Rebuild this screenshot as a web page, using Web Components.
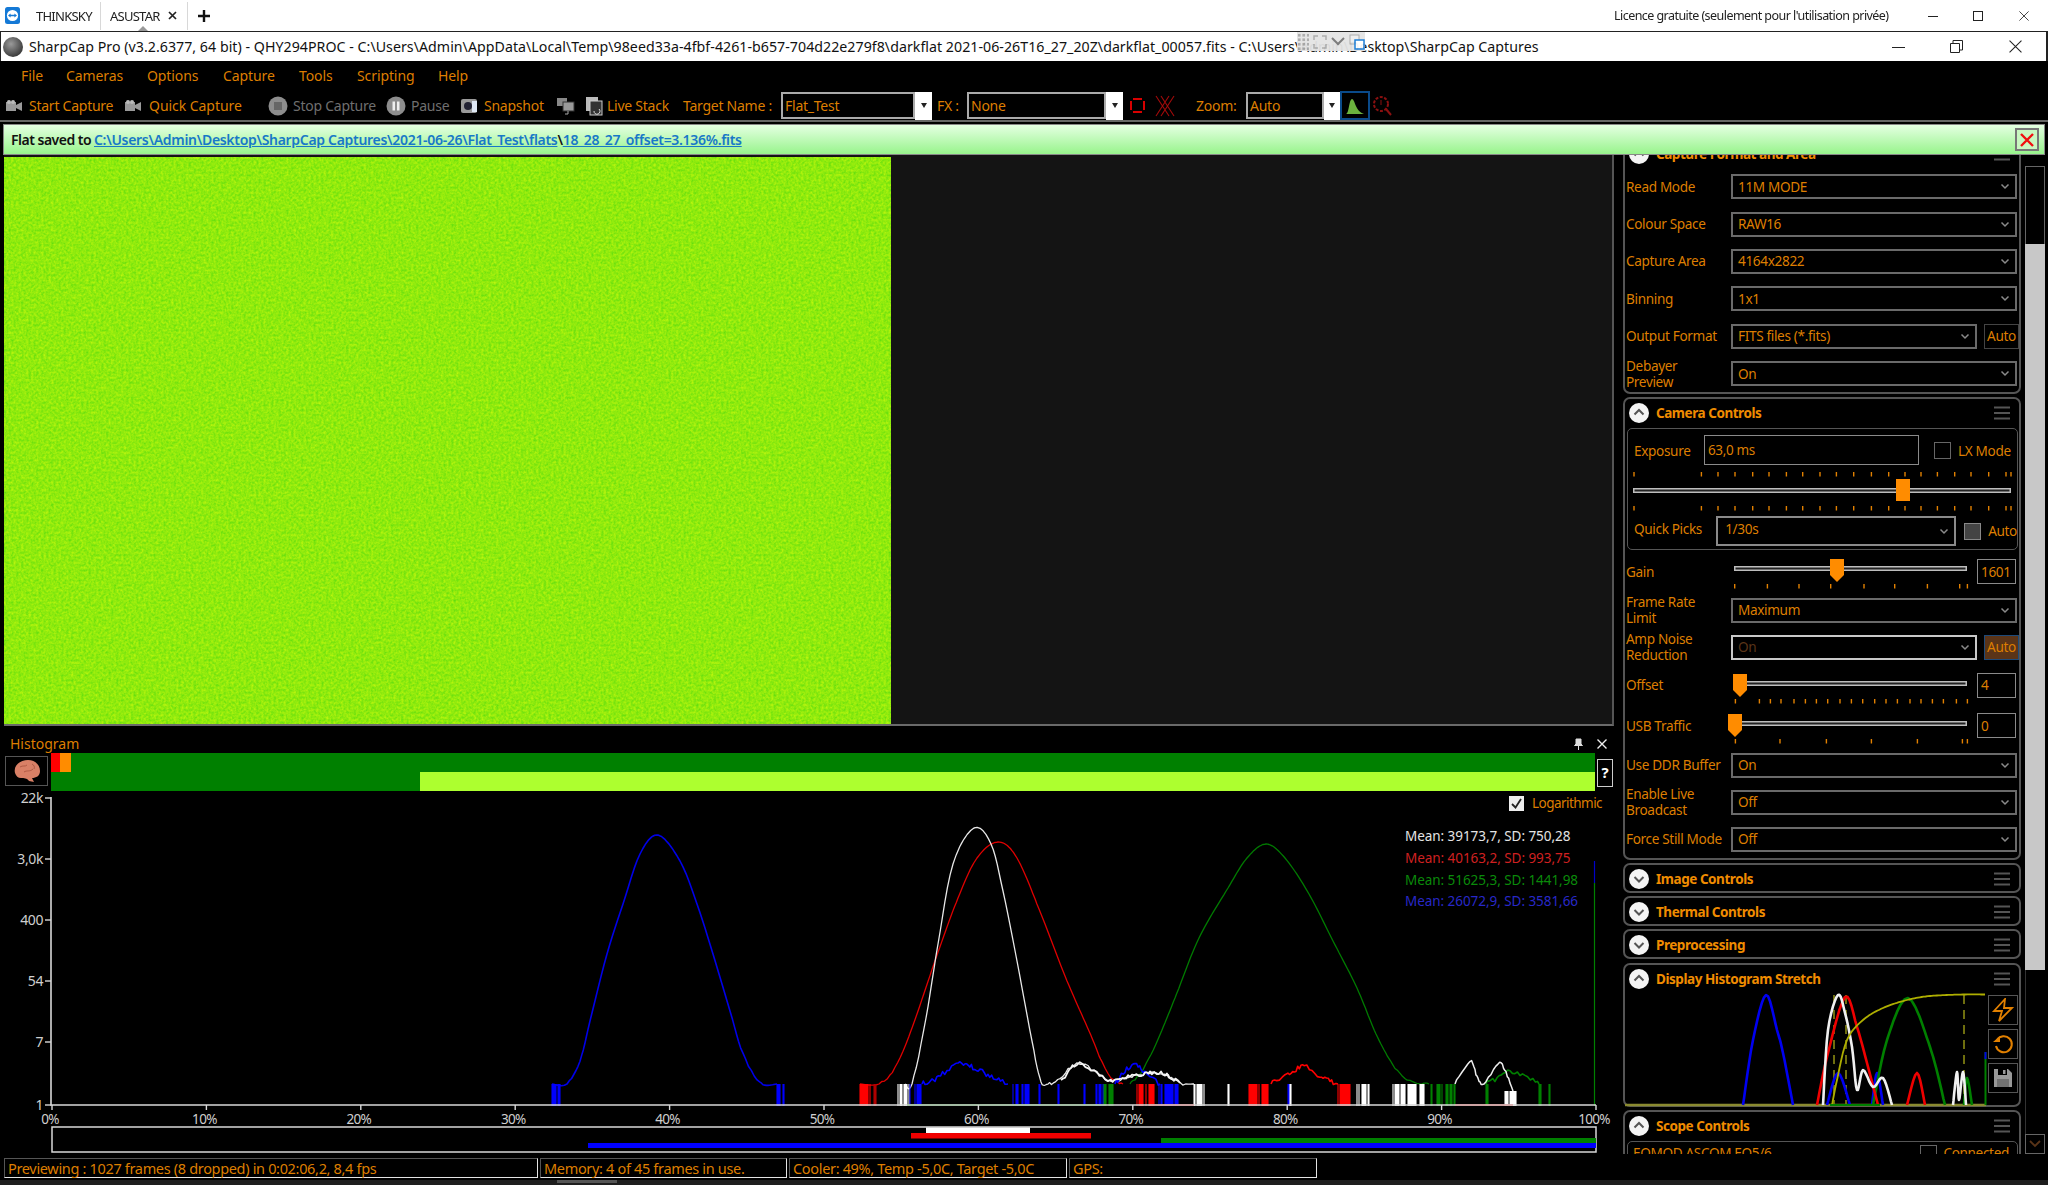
<!doctype html>
<html>
<head>
<meta charset="utf-8">
<title>SharpCap Pro</title>
<style>
  html, body { margin: 0; background: #000; }
  body { width: 2048px; height: 1185px; overflow: hidden; font-family: "Noto Sans", "Open Sans", sans-serif; }
  #app { display: flex; flex-direction: column; width: 2048px; height: 1185px; filter: blur(0.55px); }
</style>
</head>
<body>
<div id="app">
  <tab-strip></tab-strip>
  <title-strip></title-strip>
  <menu-strip></menu-strip>
  <tool-strip></tool-strip>
  <notice-strip></notice-strip>
  <main-area>
    <left-column>
      <view-pane></view-pane>
      <histogram-pane></histogram-pane>
    </left-column>
    <side-dock></side-dock>
  </main-area>
  <status-strip></status-strip>
</div>

<script>
const ORANGE = '#dd7e00'

function shadow(el, markup) {
  el.attachShadow({ mode: 'open' }).innerHTML = markup
}

// small seeded random so the noise in the graphs is the same each run
function rng(seed) {
  let s = seed
  return () => {
    s = (s * 16807) % 2147483647
    return s / 2147483647
  }
}

function noisy(points, amp, seed) {
  const rand = rng(seed)
  const out = []
  for (let i = 0; i < points.length - 1; i++) {
    const [x1, y1] = points[i]
    const [x2, y2] = points[i + 1]
    const steps = Math.max(1, Math.round((x2 - x1) / 2))
    for (let k = 0; k < steps; k++) {
      const t = k / steps
      const y = y1 + (y2 - y1) * t
      out.push([x1 + (x2 - x1) * t, y + (y < 1083 && y > 1050 ? (rand() - 0.5) * amp : 0)])
    }
  }
  out.push(points[points.length - 1])
  return out.map(p => p[0].toFixed(1) + ',' + p[1].toFixed(1)).join(' ')
}

// Catmull-Rom through the points, keeps the big bell curves round
function smooth(points, n = 6) {
  const out = []
  for (let i = 0; i < points.length - 1; i++) {
    const p0 = points[i - 1] || points[i]
    const p1 = points[i]
    const p2 = points[i + 1]
    const p3 = points[i + 2] || p2
    for (let k = 0; k < n; k++) {
      const t = k / n
      const f = a => 0.5 * (2 * p1[a] + (p2[a] - p0[a]) * t +
        (2 * p0[a] - 5 * p1[a] + 4 * p2[a] - p3[a]) * t * t +
        (3 * p1[a] - p0[a] - 3 * p2[a] + p3[a]) * t * t * t)
      out.push([f(0), f(1)])
    }
  }
  out.push(points[points.length - 1])
  return out
}

function poly(points, color, width = 1.2, amp = 0, seed = 7) {
  return `<polyline fill="none" stroke="${color}" stroke-width="${width}" stroke-linejoin="round" points="${noisy(smooth(points), amp, seed)}"/>`
}

function bars(x1, x2, color, seed, top = 1083) {
  const rand = rng(seed)
  let d = ''
  for (let x = x1; x <= x2; x++) {
    if (rand() < 0.7 || x === x1) d += `M${x} ${top}V1105`
  }
  return `<path d="${d}" stroke="${color}" stroke-width="1.1" fill="none"/>`
}

const chevron = `<svg width="10" height="7" viewBox="0 0 10 7"><path d="M1.5 1.5 5 5l3.5-3.5" fill="none" stroke="#8a8a8a" stroke-width="1.5"/></svg>`

const winClose = s => `<svg width="${s}" height="${s}" viewBox="0 0 12 12"><path d="M.5.5l11 11M11.5.5l-11 11" stroke="#222" stroke-width="1"/></svg>`

class TabStrip extends HTMLElement {
  constructor() {
    super()
    shadow(this, `
      <style>
        :host { display: flex; align-items: center; height: 31px; flex: none; background: #fff; color: #222; font: 13px "Noto Sans", sans-serif; letter-spacing: -.75px; position: relative; }
        .logo { margin-left: 5px; width: 15px; height: 17px; }
        .tab { white-space: nowrap; }
        .sep { width: 1px; height: 28px; background: #d8d8d8; }
        .caret { position: absolute; left: 137px; top: 26px; width: 0; height: 0; border: 6px solid transparent; border-top: 0; border-bottom: 6px solid #999; }
        .right { margin-left: auto; display: flex; align-items: center; }
        .lic { width: 274px; white-space: nowrap; font-size: 12.5px; letter-spacing: -.55px; }
      </style>
      <svg class="logo" viewBox="0 0 15 17"><rect width="15" height="17" rx="2.5" fill="#1479d6"/><circle cx="7.5" cy="8.5" r="5.6" fill="#fff"/><path d="M3 8.5l2.6-2v1.2h3.8V6.5l2.6 2-2.6 2V9.3H5.6v1.2z" fill="#1479d6"/></svg>
      <span class="tab" style="margin-left:16px;width:64px">THINKSKY</span>
      <span class="sep"></span>
      <span class="tab" style="margin-left:9px;width:55px">ASUSTAR</span>
      <svg style="margin-left:3px" width="9" height="9" viewBox="0 0 9 9"><path d="M1 1l7 7M8 1L1 8" stroke="#222" stroke-width="1.7"/></svg>
      <span class="sep" style="margin-left:10px"></span>
      <svg style="margin-left:10px" width="12" height="12" viewBox="0 0 12 12"><path d="M6 0v12M0 6h12" stroke="#111" stroke-width="2.4"/></svg>
      <span class="caret"></span>
      <span class="right">
        <span class="lic">Licence gratuite (seulement pour l'utilisation privée)</span>
        <svg style="margin-left:40px" width="10" height="10" viewBox="0 0 10 10"><path d="M0 5.5h10" stroke="#222"/></svg>
        <svg style="margin-left:35px" width="10" height="10" viewBox="0 0 10 10"><rect x=".5" y=".5" width="9" height="9" fill="none" stroke="#222"/></svg>
        <span style="margin-left:36px;margin-right:19px;display:flex">${winClose(10)}</span>
      </span>
    `)
  }
}

class TitleStrip extends HTMLElement {
  constructor() {
    super()
    shadow(this, `
      <style>
        :host { display: flex; align-items: center; height: 29px; flex: none; background: #fff; color: #111; border-top: 1px solid #222; border-left: 1px solid #222; border-right: 2px solid #222; font: 14.2px "Noto Sans", sans-serif; letter-spacing: .03px; position: relative; white-space: nowrap; }
        .ball { margin-left: 2px; width: 20px; height: 20px; border-radius: 50%; background: radial-gradient(circle at 40% 35%, #9a9a9a, #3a3a3a 75%); flex: none; }
        .txt { margin-left: 6px; width: 1520px; overflow: hidden; }
        .btns { margin-left: auto; display: flex; align-items: center; }
        .float { position: absolute; left: 1296px; top: 0; width: 68px; height: 19px; background: #e4e4e4; display: flex; align-items: center; gap: 4px; opacity: .95; }
        .dots { width: 12px; height: 18px; background-image: radial-gradient(#aaa 1.5px, transparent 1.6px); background-size: 4.5px 4.5px; }
      </style>
      <span class="ball"></span>
      <span class="txt">SharpCap Pro (v3.2.6377, 64 bit) - QHY294PROC - C:\\Users\\Admin\\AppData\\Local\\Temp\\98eed33a-4fbf-4261-b657-704d22e279f8\\darkflat 2021-06-26T16_27_20Z\\darkflat_00057.fits - C:\\Users\\Admin\\Desktop\\SharpCap Captures</span>
      <span class="btns">
        <svg width="13" height="12" viewBox="0 0 13 12"><path d="M0 6.5h13" stroke="#222"/></svg>
        <svg style="margin-left:45px" width="13" height="13" viewBox="0 0 13 13"><path d="M.5 3.5h9v9h-9zM3 3.5V.5h9.5v9.5H9.5" fill="none" stroke="#222"/></svg>
        <span style="margin-left:46px;margin-right:24px;display:flex">${winClose(13)}</span>
      </span>
      <div class="float">
        <span class="dots"></span>
        <svg width="14" height="14" viewBox="0 0 14 14"><path d="M1 5V1h4M9 1h4v4M13 9v4H9M5 13H1V9" fill="none" stroke="#aaa" stroke-width="1.5"/></svg>
        <svg width="14" height="9" viewBox="0 0 14 9"><path d="M1 1l6 6 6-6" fill="none" stroke="#777" stroke-width="2"/></svg>
        <svg width="16" height="16" viewBox="0 0 16 16"><rect x="1" y="1" width="9" height="9" fill="#eee" stroke="#aaa"/><rect x="6" y="6" width="9" height="9" fill="#fff" stroke="#1479d6" stroke-width="1.5"/></svg>
      </div>
    `)
  }
}

class MenuStrip extends HTMLElement {
  constructor() {
    super()
    const items = [['File', 21], ['Cameras', 57], ['Options', 52], ['Capture', 52], ['Tools', 34], ['Scripting', 57], ['Help', 30]]
    shadow(this, `
      <style>
        :host { display: flex; align-items: center; box-sizing: border-box; height: 30px; flex: none; padding: 0 0 2px 21px; gap: 24px; background: #000; color: ${ORANGE}; font: 14px "Noto Sans", sans-serif; letter-spacing: -.1px; white-space: nowrap; }
      </style>
      ${items.map(([t, w]) => `<span style="width:${w}px">${t}</span>`).join('')}
    `)
  }
}

class ToolStrip extends HTMLElement {
  constructor() {
    super()
    const cam = `<svg width="18" height="14" viewBox="0 0 18 14"><path d="M1 3h10v9H1zM11 6l6-3v9l-6-3z" fill="#9a9a9a"/><circle cx="4" cy="3" r="2" fill="#bbb"/><circle cx="8" cy="3" r="2" fill="#bbb"/></svg>`
    const roundBtn = mark => `<svg width="20" height="20" viewBox="0 0 20 20"><circle cx="10" cy="10" r="9.5" fill="#8d8d8d"/>${mark}</svg>`
    const combo = (w, text, arrow, color = ORANGE) => `
      <span class="combo" style="width:${w}px"><span class="val" style="color:${color}">${text}</span></span><span class="drop" style="width:${arrow}px"><i></i></span>`
    shadow(this, `
      <style>
        :host { display: flex; align-items: center; height: 29px; flex: none; background: #000; border-bottom: 2px solid #666; color: ${ORANGE}; font: 14px "Noto Sans", sans-serif; letter-spacing: -.25px; white-space: nowrap; padding-left: 5px; box-sizing: content-box; }
        .t { display: block; }
        .dim { color: #6f6f6f; }
        .combo { display: flex; align-items: center; height: 27px; box-sizing: border-box; border: 2px solid #aaa; background: #000; padding-left: 2px; }
        .drop { display: flex; align-items: center; justify-content: center; height: 28px; background: #fff; }
        .drop i { width: 0; height: 0; border: 3.5px solid transparent; border-top: 5px solid #222; border-bottom: 0; }
        svg { flex: none; }
      </style>
      ${cam}
      <span class="t" style="margin-left:6px;width:95px">Start Capture</span>
      ${cam}
      <span class="t" style="margin-left:7px;width:94px;letter-spacing:-.05px">Quick Capture</span>
      <span style="margin-left:25px;display:flex">${roundBtn('<rect x="6" y="6" width="8" height="8" fill="#666"/>')}</span>
      <span class="t dim" style="margin-left:5px;width:93px">Stop Capture</span>
      ${roundBtn('<rect x="6.5" y="5.5" width="2.5" height="9" fill="#eee"/><rect x="11" y="5.5" width="2.5" height="9" fill="#eee"/>')}
      <span class="t dim" style="margin-left:5px;width:49px">Pause</span>
      <svg width="18" height="20" viewBox="0 0 18 20"><rect x="1" y="3" width="16" height="14" rx="2" fill="#9a9a9a"/><circle cx="8" cy="10" r="4" fill="#223"/><rect x="12" y="5" width="5" height="11" fill="#dfe8f5"/></svg>
      <span class="t" style="margin-left:6px;width:72px">Snapshot</span>
      <svg width="19" height="18" viewBox="0 0 19 18"><rect x="1" y="1" width="10" height="8" fill="#888"/><rect x="7" y="5" width="11" height="9" fill="#999" stroke="#333"/><path d="M12 14v3h-3" stroke="#aaa" fill="none"/></svg>
      <svg style="margin-left:10px" width="18" height="22" viewBox="0 0 18 22"><rect x="1" y="2" width="12" height="14" fill="#bbb"/><rect x="5" y="6" width="12" height="14" fill="#333" stroke="#ccc"/><path d="M9 16a3 3 0 1 0 5-2" fill="none" stroke="#ddd"/></svg>
      <span class="t" style="margin-left:4px;width:76px">Live Stack</span>
      <span class="t" style="width:98px">Target Name :</span>
      ${combo(134, 'Flat_Test', 17)}
      <span class="t" style="margin-left:5px;width:30px">FX :</span>
      ${combo(139, 'None', 17)}
      <svg style="margin-left:7px" width="15" height="15" viewBox="0 0 15 15"><rect x="1" y="1" width="13" height="13" fill="none" stroke="#d80000" stroke-width="2"/><path d="M0 0h3v3H0zM12 0h3v3h-3zM0 12h3v3H0zM12 12h3v3h-3z" fill="#000"/></svg>
      <svg style="margin-left:10px" width="20" height="22" viewBox="0 0 20 22"><path d="M1 1l13 20M6 1l13 20M14 1L1 21M19 1L6 21" stroke="#a30a0a" stroke-width="1.1" fill="none"/></svg>
      <span class="t" style="margin-left:21px;width:50px">Zoom:</span>
      ${combo(78, 'Auto', 16)}
      <span style="display:flex;box-sizing:border-box;width:30px;height:29px;border:2px solid #0a4a8a;align-items:center;justify-content:center"><svg width="20" height="20" viewBox="0 0 20 20"><path d="M1 18c3 0 3-15 6-15s3 12 12 15z" fill="#6cb33e"/></svg></span>
      <svg style="margin-left:2px" width="20" height="22" viewBox="0 0 20 22"><circle cx="9" cy="9" r="7" fill="none" stroke="#8a1010" stroke-width="2" stroke-dasharray="3 1.5"/><path d="M9 5v5" stroke="#8a1010"/><path d="M14 14l5 6" stroke="#8a1010" stroke-width="2"/></svg>
    `)
  }
}

class NoticeStrip extends HTMLElement {
  constructor() {
    super()
    shadow(this, `
      <style>
        :host { display: flex; align-items: center; height: 31px; flex: none; margin: 2px 3px 0 3px; box-sizing: border-box; border: 1px solid #888; background: linear-gradient(#e4ffe2, #98f48c); font: 600 14px "Noto Sans", sans-serif; letter-spacing: -.31px; color: #111; white-space: nowrap; position: relative; z-index: 2; }
        .lead { margin-left: 7px; width: 83px; letter-spacing: -.5px; }
        a { color: #1878c8; text-decoration: underline; }
        .close { margin-left: auto; margin-right: 5px; width: 24px; height: 23px; box-sizing: border-box; border: 2px solid #777; background: #c8f8c0; display: flex; align-items: center; justify-content: center; }
      </style>
      <span class="lead">Flat saved to</span>
      <span><a>C:\\Users\\Admin\\Desktop\\SharpCap Captures\\2021-06-26\\Flat_Test\\flats</a>\\<a>18_28_27_offset=3.136%.fits</a></span>
      <span class="close"><svg width="14" height="14" viewBox="0 0 14 14"><path d="M1 1l12 12M13 1L1 13" stroke="#f01010" stroke-width="2.4"/></svg></span>
    `)
  }
}

class MainArea extends HTMLElement {
  constructor() {
    super()
    shadow(this, `
      <style>:host { display: flex; flex: none; height: 1003px; background: #000; }</style>
      <slot></slot>
    `)
  }
}

class LeftColumn extends HTMLElement {
  constructor() {
    super()
    shadow(this, `
      <style>:host { display: flex; flex-direction: column; width: 1616px; flex: none; }</style>
      <slot></slot>
    `)
  }
}

class ViewPane extends HTMLElement {
  constructor() {
    super()
    shadow(this, `
      <style>
        :host { display: flex; flex: none; height: 571px; box-sizing: border-box; margin: 0 2px 0 4px; padding-top: 2px; background: #141414; border-bottom: 2px solid #6a6a6a; border-right: 2px solid #555; }
        .img { width: 887px; height: 100%; background: #8eea0c; position: relative; overflow: hidden; }
        svg { position: absolute; inset: 0; width: 100%; height: 100%; }
      </style>
      <div class="img">
        <svg><filter id="grain" color-interpolation-filters="sRGB" x="0" y="0" width="100%" height="100%"><feTurbulence type="fractalNoise" baseFrequency=".4" numOctaves="2" seed="4"/><feColorMatrix values=".45 0 0 0 .34  .12 0 0 0 .86  0 0 0 0 .05  0 0 0 0 1"/></filter><rect width="100%" height="100%" filter="url(#grain)"/></svg>
      </div>
    `)
  }
}

class HistogramPane extends HTMLElement {
  constructor() {
    super()
    shadow(this, `
      <style>
        :host { display: flex; flex-direction: column; flex: 1; min-height: 0; background: #000; position: relative; }
        .head { display: flex; align-items: center; box-sizing: border-box; height: 27px; flex: none; padding: 8px 0 0 10px; color: ${ORANGE}; font: 14px "Noto Sans", sans-serif; }
        .head .r { margin-left: auto; display: flex; align-items: center; gap: 14px; margin-right: 9px; }
        .levels { display: flex; height: 38px; flex: none; align-items: stretch; }
        .brain { width: 43px; height: 30px; margin: 3px 3px 0 5px; box-sizing: border-box; border: 1.5px solid #555; display: flex; align-items: center; justify-content: center; flex: none; }
        .track { position: relative; width: 1544px; background: #008000; flex: none; }
        .track i { position: absolute; display: block; height: 50%; }
        .q { width: 16px; height: 28px; margin: 6px 0 0 2px; box-sizing: border-box; border: 1.5px solid #ccc; color: #fff; font: 700 15px "Noto Sans", sans-serif; text-align: center; line-height: 25px; }
      </style>
      <div class="head">Histogram
        <span class="r">
          <svg width="9" height="12" viewBox="0 0 9 12"><path d="M2 1h5v5l1.5 1.5h-8L2 6zM4.5 8v4" fill="#ddd" stroke="#ddd"/></svg>
          <svg width="10" height="10" viewBox="0 0 10 10"><path d="M.5.5l9 9M9.5.5l-9 9" stroke="#eee" stroke-width="1.4"/></svg>
        </span>
      </div>
      <div class="levels">
        <span class="brain"><svg width="30" height="24" viewBox="0 0 30 24"><path d="M3 14C1 6 9 1 16 1s12 5 12 11c0 5-4 7-8 7l2 4-5-1c-2-3-5-3-8-3-3 0-5-2-6-5z" fill="#d98066"/><path d="M8 8c3-2 5 0 7-2M12 13c3-2 6 0 9-3M20 5c2 1 3 3 2 5" stroke="#b05a44" fill="none"/></svg></span>
        <span class="track">
          <i style="left:0;width:9px;background:#ff0000;top:0"></i>
          <i style="left:9px;width:11px;background:#ff8c00;top:0"></i>
          <i style="left:369px;right:0;background:#adff2f;bottom:0"></i>
        </span>
        <span class="q">?</span>
      </div>
      <hist-chart></hist-chart>
    `)
  }
}

class HistChart extends HTMLElement {
  constructor() {
    super()
    const blue = [[552, 1083], [567, 1083], [580, 1060], [590, 1020], [607, 953], [623, 903], [640, 853], [658, 834], [680, 860], [697, 903], [713, 953], [730, 1010], [743, 1053], [760, 1082], [777, 1083]]
    const white = [[905, 1083], [912, 1083], [926, 1017], [938, 943], [953, 863], [974, 827], [991, 843], [1003, 890], [1017, 960], [1032, 1040], [1041, 1080], [1048, 1083], [1060, 1077], [1077, 1062], [1094, 1070], [1111, 1080], [1132, 1075], [1161, 1072], [1180, 1082], [1194, 1083]]
    const red = [[860, 1083], [879, 1083], [895, 1067], [912, 1027], [936, 957], [958, 897], [977, 857], [998, 841], [1017, 857], [1041, 913], [1065, 975], [1089, 1030], [1108, 1073], [1123, 1083]]
    const green = [[1130, 1083], [1142, 1070], [1156, 1043], [1175, 997], [1199, 937], [1228, 887], [1247, 857], [1266, 843], [1285, 857], [1309, 893], [1333, 940], [1357, 987], [1376, 1033], [1395, 1067], [1410, 1080], [1429, 1083]]
    const yl = [['22k', 798], ['3,0k', 859], ['400', 920], ['54', 981], ['7', 1042], ['1', 1105]]
    const xl = []
    for (let i = 0; i <= 10; i++) xl.push(i)
    const graph = [
      poly(blue, '#0000e6', 1.6, 2, 3),
      poly(red, '#e00000', 1.3, 2, 5),
      poly(green, '#007a00', 1.3, 2, 9),
      poly(white, '#e8e8e8', 1.3, 3, 13),
      poly([[922, 1083], [935, 1078], [960, 1063], [980, 1070], [1008, 1083]], '#0000ff', 1.6, 5, 21),
      poly([[1115, 1083], [1125, 1070], [1135, 1063], [1145, 1072], [1160, 1083]], '#0000ff', 1.6, 5, 22),
      poly([[1271, 1083], [1285, 1076], [1304, 1065], [1320, 1076], [1338, 1083]], '#ff0000', 1.6, 5, 23),
      poly([[1486, 1083], [1497, 1078], [1510, 1070], [1525, 1076], [1539, 1083]], '#008000', 1.6, 5, 24),
      poly([[1061, 1081], [1077, 1062], [1094, 1070], [1111, 1080], [1132, 1075], [1161, 1072], [1180, 1082]], '#f4f4f4', 1.8, 4, 25),
      poly([[1455, 1083], [1470, 1060], [1477, 1075], [1484, 1083], [1498, 1062], [1506, 1072], [1513, 1090]], '#eeeeee', 1.5, 3, 26),
      bars(552, 561, '#0000ff', 31), bars(777, 780, '#0000ff', 32), bars(783, 784, '#0000ff', 33),
      bars(860, 870, '#ff0000', 34), bars(874, 876, '#b00000', 35),
      bars(898, 910, '#ffffff', 36), bars(910, 922, '#0000ff', 37),
      bars(1013, 1029, '#0000ff', 38), bars(1039, 1040, '#0000ff', 39), bars(1058, 1059, '#0000ff', 40),
      bars(1084, 1086, '#0000ff', 41), bars(1096, 1104, '#0000ff', 42), bars(1104, 1113, '#008000', 43),
      bars(1137, 1154, '#ff0000', 44), bars(1159, 1180, '#0000ff', 45), bars(1194, 1204, '#ffffff', 46),
      bars(1228, 1229, '#ffffff', 47), bars(1249, 1268, '#ff0000', 48), bars(1288, 1290, '#0000ff', 49),
      bars(1290, 1291, '#ffffff', 50), bars(1338, 1352, '#ff0000', 51), bars(1357, 1371, '#ffffff', 52),
      bars(1393, 1424, '#ffffff', 53), bars(1431, 1455, '#008000', 54), bars(1486, 1488, '#008000', 55),
      bars(1505, 1516, '#ffffff', 56, 1090), bars(1539, 1541, '#008000', 57), bars(1549, 1550, '#008000', 58),
      '<path d="M907 1104H1104" stroke="#008000" stroke-width="1.5"/>',
      '<path d="M1455 1104H1513M1151 1104H1194" stroke="#e00000" stroke-width="1.5"/>',
      '<path d="M1594.5 882V1105" stroke="#008000" stroke-width="1.2"/><path d="M1594.5 860V882" stroke="#0000c8" stroke-width="1.2"/>',
    ].join('')
    const lvl = [[926, 1030, 1127.5, 6, '#fff'], [911, 1091, 1133, 5.5, '#f00000'], [1161, 1596, 1138, 5.5, '#008000'], [588, 1596, 1143, 5, '#0000ff']]
    shadow(this, `
      <style>
        :host { display: block; height: 368px; flex: none; position: relative; }
        svg { display: block; overflow: visible; }
        text { font-family: "Noto Sans", sans-serif; }
        .log { position: absolute; right: 0; top: 3px; display: flex; align-items: center; gap: 8px; color: ${ORANGE}; font: 13.5px "Noto Sans", sans-serif; letter-spacing: -.55px; }
        .box { width: 15px; height: 15px; background: #eee; display: flex; align-items: center; justify-content: center; }
      </style>
      <svg width="1616" height="368" viewBox="0 791 1616 368">
        <g transform="translate(0 1)">${graph}</g>
        <path d="M51 797V1105H1596" fill="none" stroke="#d8d8d8" stroke-width="1.6"/>
        ${yl.map(([, y]) => `<path d="M45 ${y}h6" stroke="#d8d8d8" stroke-width="1.4"/>`).join('')}
        ${yl.map(([t, y]) => `<text x="43" y="${y + 5}" text-anchor="end" fill="#cfcfcf" font-size="14" letter-spacing="-.4">${t}</text>`).join('')}
        ${xl.map(i => `<path d="M${52 + i * 154.4} 1105v5" stroke="#d8d8d8" stroke-width="1.4"/>`).join('')}
        ${xl.map(i => `<text x="${50 + i * 154.4}" y="1124" text-anchor="middle" fill="#cfcfcf" font-size="13.5" letter-spacing="-.7">${i * 10}%</text>`).join('')}
        <rect x="52" y="1127" width="1544" height="25" fill="none" stroke="#d8d8d8" stroke-width="1.5"/>
        ${lvl.map(([a, b, y, h, c]) => `<rect x="${a}" y="${y}" width="${b - a}" height="${h}" fill="${c}"/>`).join('')}
        <g font-size="13.5" letter-spacing="-.05">
          <text x="1405" y="841" fill="#e4e4e4">Mean: 39173,7, SD: 750,28</text>
          <text x="1405" y="863" fill="#d02020">Mean: 40163,2, SD: 993,75</text>
          <text x="1405" y="885" fill="#0a8a0a">Mean: 51625,3, SD: 1441,98</text>
          <text x="1405" y="906" fill="#2828c8">Mean: 26072,9, SD: 3581,66</text>
        </g>
      </svg>
      <div class="log"><span class="box"><svg width="13" height="13" viewBox="0 0 13 13"><path d="M2 7l3.5 3.5L11 2" fill="none" stroke="#222" stroke-width="1.8"/></svg></span><span style="margin-right:14px">Logarithmic</span></div>
    `)
  }
}

class DockSection extends HTMLElement {
  constructor() {
    super()
    const open = this.hasAttribute('open')
    const path = open ? 'M5.5 11.5 10 7l4.5 4.5' : 'M5.5 8 10 12.5 14.5 8'
    shadow(this, `
      <style>
        :host { display: block; flex: none; box-sizing: border-box; border: 2px solid #555; border-radius: 7px; }
        .head { display: flex; align-items: center; height: 27px; margin-bottom: 2px; padding-left: 4px; color: #f08c00; font: 700 13.5px "Noto Sans", sans-serif; letter-spacing: -.45px; white-space: nowrap; }
        .head span { margin-left: 7px; }
        .lines { margin-left: auto; margin-right: 9px; }
      </style>
      <div class="head">
        <svg width="20" height="20" viewBox="0 0 20 20"><circle cx="10" cy="10" r="10" fill="#f4f4f4"/><path d="${path}" fill="none" stroke="#555" stroke-width="2"/></svg>
        <span>${this.getAttribute('title')}</span>
        <svg class="lines" width="16" height="14" viewBox="0 0 16 14"><path d="M0 1.5h16M0 7h16M0 12.5h16" stroke="#555" stroke-width="1.8"/></svg>
      </div>
      <slot></slot>
    `)
  }
}

class ComboBox extends HTMLElement {
  constructor() {
    super()
    const w = this.getAttribute('w') || 286
    const h = this.getAttribute('h') || 25
    shadow(this, `
      <style>
        :host { display: flex; align-items: center; box-sizing: border-box; width: ${w}px; height: ${h}px; border: 2px solid ${this.getAttribute('line') || '#6a6a6a'}; flex: none; padding: 0 5px 0 5px; color: ${this.getAttribute('color') || ORANGE}; }
        span { flex: 1; white-space: nowrap; }
      </style>
      <span><slot></slot></span>
      ${chevron}
    `)
  }
}

class DockRow extends HTMLElement {
  constructor() {
    super()
    shadow(this, `
      <style>
        :host { display: flex; align-items: center; box-sizing: border-box; height: ${this.getAttribute('h') || 37.4}px; padding-left: 1px; color: ${ORANGE}; font: 13.6px/16px "Noto Sans", sans-serif; letter-spacing: -.35px; }
        .l { width: 105px; flex: none; white-space: pre-line; }
        ::slotted(.auto) { margin-left: 7px; }
      </style>
      <span class="l">${this.getAttribute('label')}</span>
      <slot></slot>
    `)
  }
}

class AutoButton extends HTMLElement {
  constructor() {
    super()
    const on = this.hasAttribute('on')
    shadow(this, `
      <style>
        :host { display: flex; align-items: center; justify-content: center; box-sizing: border-box; width: 35px; height: 25px; border: 1.5px solid ${on ? '#1d4a7a' : '#444'}; background: ${on ? '#5a3418' : '#000'}; color: ${ORANGE}; flex: none; }
      </style>
      Auto
    `)
  }
}

class TickSlider extends HTMLElement {
  constructor() {
    super()
    const w = +this.getAttribute('w') || 240
    const h = +this.getAttribute('h') || 38
    const top = +this.getAttribute('top')
    const x1 = +this.getAttribute('x1')
    const x2 = +this.getAttribute('x2')
    const thumb = +this.getAttribute('thumb')
    const ticks = this.getAttribute('ticks').split(' ').map(Number)
    const both = this.hasAttribute('both')
    const tick = y => ticks.map(x => `<rect x="${x}" y="${y}" width="1.4" height="4.5" fill="#e28000"/>`).join('')
    const grip = both
      ? `<rect x="${thumb}" y="${top - 9}" width="14" height="22" fill="#ff8c00"/>`
      : `<path d="M${thumb} ${top - 7}h14v16l-7 7-7-7z" fill="#ff8c00"/>`
    shadow(this, `
      <style>:host { display: block; width: ${w}px; height: ${h}px; flex: none; } svg { display: block; overflow: visible; }</style>
      <svg width="${w}" height="${h}" viewBox="0 0 ${w} ${h}">
        ${both ? tick(top - 16) : ''}
        <rect x="${x1 + .75}" y="${top + .75}" width="${x2 - x1 - 1.5}" height="3.5" fill="#222" stroke="#bdbdbd" stroke-width="1.5"/>
        ${grip}
        ${tick(top + 18)}
      </svg>
    `)
  }
}

class ValueBox extends HTMLElement {
  constructor() {
    super()
    shadow(this, `
      <style>:host { display: flex; align-items: center; box-sizing: border-box; width: 39px; height: 25px; border: 1.5px solid #8a8a8a; padding-left: 3px; margin-left: 6px; color: ${ORANGE}; flex: none; }</style>
      <slot></slot>
    `)
  }
}

class MiniHist extends HTMLElement {
  constructor() {
    super()
    const w = 2.6
    const dash = x => `<path d="M${x} 995V1105" stroke="#7a7a10" stroke-width="1.8" stroke-dasharray="9 6"/>`
    const btn = (svg) => `<span class="b">${svg}</span>`
    shadow(this, `
      <style>
        :host { display: flex; height: 111px; flex: none; position: relative; }
        svg.g { display: block; overflow: visible; }
        .col { display: flex; flex-direction: column; gap: 4px; position: absolute; left: 363px; top: 1px; }
        .b { width: 30px; height: 30px; box-sizing: border-box; border: 1.5px solid #555; display: flex; align-items: center; justify-content: center; }
      </style>
      <svg class="g" width="396" height="113" viewBox="1625 994 396 113">
        <path d="M1625 1105H1986" stroke="#8a8a30" stroke-width="2.5"/>
        ${dash(1834)}${dash(1846)}${dash(1964)}
        ${poly([[1743, 1105], [1753, 1040], [1766, 995], [1777, 1030], [1783, 1053], [1793, 1105]], '#0000f0', w)}
        ${poly([[1827, 1105], [1838, 1073], [1850, 1105]], '#0000f0', w)}
        ${poly([[1872, 1105], [1877, 1073], [1883, 1105]], '#0000f0', w)}
        ${poly([[1873, 1105], [1887, 1040], [1908, 998], [1930, 1047], [1945, 1105]], '#008000', w)}
        ${poly([[1817, 1105], [1827, 1057], [1845, 997], [1857, 1027], [1867, 1063], [1878, 1105]], '#f00000', w)}
        ${poly([[1907, 1105], [1917, 1073], [1925, 1105]], '#f00000', w)}
        ${poly([[1964, 1105], [1967, 1078], [1972, 1105]], '#008000', w)}
        ${poly([[1823, 1105], [1828, 1030], [1838, 995], [1845, 1013], [1852, 1047], [1857, 1090], [1863, 1070], [1873, 1087], [1883, 1078], [1892, 1105]], '#f0f0f0', w)}
        ${poly([[1953, 1105], [1957, 1072], [1959, 1100], [1963, 1072], [1966, 1105]], '#f0f0f0', w)}
        ${poly([[1832, 1105], [1837, 1080], [1847, 1040], [1863, 1020], [1883, 1008], [1907, 1000], [1930, 996], [1963, 994.5], [1985, 994.5]], '#aeae00', 1.8)}
        <path d="M1830 1105H1880" stroke="#008000" stroke-width="2"/>
        <path d="M1985.5 1052V1105" stroke="#008000" stroke-width="2"/><path d="M1985.5 1052v7" stroke="#0000e0" stroke-width="2"/>
      </svg>
      <div class="col">
        ${btn(`<svg width="24" height="24" viewBox="0 0 24 24"><path d="M14 1 3 13h8l-3 10L21 10h-8z" fill="none" stroke="#e28000" stroke-width="1.8"/></svg>`)}
        ${btn(`<svg width="22" height="22" viewBox="0 0 22 22"><path d="M5 7a8 8 0 1 1-1 6" fill="none" stroke="#e28000" stroke-width="2"/><path d="M1 9h7V3z" fill="#e28000"/></svg>`)}
        ${btn(`<svg width="20" height="20" viewBox="0 0 20 20"><path d="M1 1h14l4 4v14H1z" fill="#999"/><rect x="5" y="1" width="9" height="6" fill="#000"/><rect x="10" y="2" width="2.5" height="4" fill="#999"/><rect x="4" y="11" width="12" height="8" fill="#000" opacity=".25"/></svg>`)}
      </div>
    `)
  }
}

class SideDock extends HTMLElement {
  constructor() {
    super()
    const tickX = s => s.split(' ').map(v => (+v / 3 + 1610 - 1731).toFixed(1)).join(' ')
    const expo = '70 272 322 373 426 475 527 576 628 677 729 782 834 883 931 980 1032 1081 1134 1186 1201'.split(' ').map(v => (+v / 3 + 1610 - 1632).toFixed(1)).join(' ')
    const gain = tickX('372 470 565 660 760 852 950 1047 1070')
    const off = tickX('374 446 479 511 550 584 617 651 688 722 756 792 826 860 898 931 965 998 1037 1070')
    const usb = tickX('374 508 647 782 920 1055 1070')
    shadow(this, `
      <style>
        :host { display: flex; width: 432px; flex: none; height: 1003px; background: #000; }
        .scroller { width: 398px; margin-left: 7px; height: 999px; overflow: hidden; flex: none; }
        .stack { display: flex; flex-direction: column; gap: 3px; margin-top: -17px; }
        .inner { box-sizing: border-box; margin: 0 1px 0 2px; height: 122px; border: 1.5px solid #555; border-radius: 5px; color: ${ORANGE}; font: 13.6px "Noto Sans", sans-serif; letter-spacing: -.35px; }
        .line { display: flex; align-items: center; }
        .edit { box-sizing: border-box; width: 215px; height: 30px; border: 1.5px solid #8a8a8a; margin-left: 18px; padding-left: 3px; display: flex; align-items: center; font-size: 13.5px; }
        .chk { width: 17px; height: 17px; box-sizing: border-box; border: 1.5px solid #666; flex: none; }
        .chk.on { background: #444; border-color: #888; }
        .scope { box-sizing: border-box; margin: 0 1px 0 2px; border: 1.5px solid #555; border-radius: 5px; color: ${ORANGE}; display: flex; align-items: flex-start; height: 30px; padding: 1px 0 0 5px; font: 13.6px "Noto Sans", sans-serif; letter-spacing: -.35px; white-space: nowrap; }
        .scope .chk { margin-top: 2px; }
        .bar { width: 20px; margin-left: 4px; height: 999px; flex: none; display: flex; flex-direction: column; }
        .bar .top { height: 11px; flex: none; }
        .bar .trk { height: 78px; box-sizing: border-box; border: 1px solid #666; border-bottom: 0; background: #000; flex: none; }
        .bar .thumb { height: 726px; background: #c8c8c8; flex: none; }
        .bar .rest { height: 164px; flex: none; border-left: 1px solid #333; box-sizing: border-box; }
        .bar .down { height: 20px; box-sizing: border-box; border: 1.5px solid #666; display: flex; align-items: center; justify-content: center; flex: none; }
      </style>
      <div class="scroller">
        <div class="stack">
          <dock-section open title="Capture Format and Area" style="height:256px">
            <dock-row label="Read Mode" style="margin-top:-1px"><combo-box>11M MODE</combo-box></dock-row>
            <dock-row label="Colour Space"><combo-box>RAW16</combo-box></dock-row>
            <dock-row label="Capture Area"><combo-box>4164x2822</combo-box></dock-row>
            <dock-row label="Binning"><combo-box>1x1</combo-box></dock-row>
            <dock-row label="Output Format"><combo-box w="246">FITS files (*.fits)</combo-box><auto-button class="auto"></auto-button></dock-row>
            <dock-row label="Debayer
Preview"><combo-box>On</combo-box></dock-row>
          </dock-section>
          <dock-section open title="Camera Controls" style="height:463px">
            <div class="inner">
              <div class="line" style="height:42px;padding-left:6px"><span style="width:52px;white-space:nowrap">Exposure</span><span class="edit">63,0 ms</span><span class="chk" style="margin-left:15px"></span><span style="margin-left:7px;white-space:nowrap">LX Mode</span></div>
              <tick-slider both w="386" h="42" top="17" x1="1" x2="379" thumb="264" ticks="${expo}" style="margin-left:4px"></tick-slider>
              <div class="line" style="height:36px;padding-left:6px"><span style="width:84px;white-space:nowrap;padding-bottom:6px">Quick Picks</span><combo-box w="240" h="30" line="#8a8a8a"><span style="display:block;padding:0 0 6px 2px">1/30s</span></combo-box><span class="chk on" style="margin-left:8px"></span><span style="margin-left:7px;padding-bottom:2px">Auto</span></div>
            </div>
            <dock-row label="Gain" h="39" style="margin-top:2px"><tick-slider h="39" top="14" x1="3" x2="236" thumb="99" ticks="${gain}"></tick-slider><value-box>1601</value-box></dock-row>
            <dock-row label="Frame Rate
Limit" h="38"><combo-box>Maximum</combo-box></dock-row>
            <dock-row label="Amp Noise
Reduction" h="36"><combo-box w="246" line="#c8c8c8" color="#5a3418">On</combo-box><auto-button on class="auto"></auto-button></dock-row>
            <dock-row label="Offset" h="40"><tick-slider h="40" top="16" x1="3" x2="236" thumb="2" ticks="${off}"></tick-slider><value-box>4</value-box></dock-row>
            <dock-row label="USB Traffic" h="41"><tick-slider h="40" top="15" x1="3" x2="236" thumb="-3" ticks="${usb}"></tick-slider><value-box>0</value-box></dock-row>
            <dock-row label="Use DDR Buffer" h="38"><combo-box>On</combo-box></dock-row>
            <dock-row label="Enable Live
Broadcast" h="36"><combo-box>Off</combo-box></dock-row>
            <dock-row label="Force Still Mode" h="38"><combo-box>Off</combo-box></dock-row>
          </dock-section>
          <dock-section title="Image Controls" style="height:30px"></dock-section>
          <dock-section title="Thermal Controls" style="height:30px"></dock-section>
          <dock-section title="Preprocessing" style="height:30px;margin-bottom:1px"></dock-section>
          <dock-section open title="Display Histogram Stretch" style="height:144px"><mini-hist></mini-hist></dock-section>
          <dock-section open title="Scope Controls" style="height:90px">
            <div class="scope"><span>EQMOD ASCOM EQ5/6</span><span class="chk" style="margin-left:auto"></span><span style="margin:0 8px 0 6px">Connected</span></div>
          </dock-section>
        </div>
      </div>
      <div class="bar">
        <span class="top"></span>
        <span class="trk"></span>
        <span class="thumb"></span>
        <span class="rest"></span>
        <span class="down"><svg width="12" height="8" viewBox="0 0 12 8"><path d="M1 1l5 5 5-5" fill="none" stroke="#5a3418" stroke-width="1.8"/></svg></span>
      </div>
    `)
  }
}

class StatusCell extends HTMLElement {
  constructor() {
    super()
    shadow(this, `
      <style>
        :host { display: flex; align-items: center; box-sizing: border-box; height: 20px; padding-left: 3px; flex: none; border: 1.5px solid #555; border-right-color: #e4e4e4; border-bottom-color: #e4e4e4; color: ${ORANGE}; font: 14.5px "Noto Sans", sans-serif; letter-spacing: -.33px; white-space: nowrap; }
      </style>
      <slot></slot>
    `)
  }
}

class StatusStrip extends HTMLElement {
  constructor() {
    super()
    shadow(this, `
      <style>
        :host { display: flex; flex: none; height: 27px; box-sizing: border-box; padding-left: 4px; gap: 2px; background: linear-gradient(#000 0 22px, #1e1e1e 22px); position: relative; }
        .grip { position: absolute; left: 557px; top: 22px; width: 60px; height: 3px; background: #555; }
      </style>
      <status-cell style="width:534px">Previewing : 1027 frames (8 dropped) in 0:02:06,2, 8,4 fps</status-cell>
      <status-cell style="width:247px">Memory: 4 of 45 frames in use.</status-cell>
      <status-cell style="width:278px">Cooler: 49%, Temp -5,0C, Target -5,0C</status-cell>
      <status-cell style="width:248px">GPS:</status-cell>
      <span class="grip"></span>
    `)
  }
}

customElements.define('tab-strip', TabStrip)
customElements.define('title-strip', TitleStrip)
customElements.define('menu-strip', MenuStrip)
customElements.define('tool-strip', ToolStrip)
customElements.define('notice-strip', NoticeStrip)
customElements.define('main-area', MainArea)
customElements.define('left-column', LeftColumn)
customElements.define('view-pane', ViewPane)
customElements.define('histogram-pane', HistogramPane)
customElements.define('hist-chart', HistChart)
customElements.define('dock-section', DockSection)
customElements.define('combo-box', ComboBox)
customElements.define('dock-row', DockRow)
customElements.define('auto-button', AutoButton)
customElements.define('tick-slider', TickSlider)
customElements.define('value-box', ValueBox)
customElements.define('mini-hist', MiniHist)
customElements.define('side-dock', SideDock)
customElements.define('status-cell', StatusCell)
customElements.define('status-strip', StatusStrip)
</script>
</body>
</html>
